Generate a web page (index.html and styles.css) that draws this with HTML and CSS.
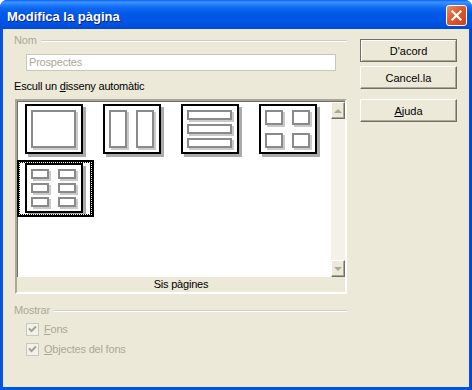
FILE: index.html
```html
<!DOCTYPE html>
<html lang="ca">
<head>
    <meta charset="UTF-8">
    <title>Modifica la pàgina</title>
    <link rel="stylesheet" href="styles.css">
</head>
<body>
    <div class="window">
        <div class="titlebar">
            <span class="title">Modifica la pàgina</span>
            <span class="close-btn">
                <svg width="13" height="13" viewBox="0 0 13 13"><path d="M2.5 2.5 L10.5 10.5 M10.5 2.5 L2.5 10.5" stroke="#fff" stroke-width="2.2" stroke-linecap="square"/></svg>
            </span>
        </div>
        <div class="client">
            <div class="main">
                <div class="fixed-line disabled"><span>Nom</span><i></i></div>
                <div class="name-field">Prospectes</div>
                <div class="label">Escull un <u>d</u>isseny automàtic</div>
                <div class="layout-box">
                    <div class="layout-area">
                        <div class="layout-grid">
                            <div class="cell"><div class="page one"><b></b></div></div>
                            <div class="cell"><div class="page two"><b></b><b></b></div></div>
                            <div class="cell"><div class="page three"><b></b><b></b><b></b></div></div>
                            <div class="cell"><div class="page four"><b></b><b></b><b></b><b></b></div></div>
                            <div class="cell selected"><div class="page six"><b></b><b></b><b></b><b></b><b></b><b></b></div></div>
                        </div>
                        <div class="scrollbar">
                            <div class="sb-btn"><span class="arrow up"></span></div>
                            <div class="sb-btn"><span class="arrow down"></span></div>
                        </div>
                    </div>
                    <div class="layout-name">Sis pàgines</div>
                </div>
                <div class="fixed-line disabled section"><span>Mostrar</span><i></i></div>
                <div class="check disabled">
                    <span class="box"><svg width="11" height="11" viewBox="0 0 11 11"><path d="M2 4.5 L4.5 7 L9 2.5" fill="none" stroke="#a5a291" stroke-width="2"/></svg></span>
                    <span><u>F</u>ons</span>
                </div>
                <div class="check disabled second">
                    <span class="box"><svg width="11" height="11" viewBox="0 0 11 11"><path d="M2 4.5 L4.5 7 L9 2.5" fill="none" stroke="#a5a291" stroke-width="2"/></svg></span>
                    <span><u>O</u>bjectes del fons</span>
                </div>
            </div>
            <div class="buttons">
                <button class="btn default">D'acord</button>
                <button class="btn">Cancel.la</button>
                <button class="btn help"><u>A</u>juda</button>
            </div>
        </div>
    </div>
</body>
</html>
```

FILE: styles.css
```css
body {
    margin: 0;
    background: #fff;
    font-family: "Liberation Sans", Arial, sans-serif;
    font-size: 11px;
    letter-spacing: -0.2px;
    color: #000;
}

.window {
    width: 472px;
    height: 390px;
    display: flex;
    flex-direction: column;
    background: linear-gradient(to right, #0a3fc8 0, #0958ee 1px, #0055e5 3px, #0055e5 469px, #0a3fc8 472px);
    border-radius: 7px 7px 0 0;
    overflow: hidden;
}

.titlebar {
    height: 29px;
    display: flex;
    align-items: center;
    justify-content: space-between;
    padding: 0 5px 0 7px;
    background: linear-gradient(#0a5ef5 0, #3d95ff 2px, #2a85fb 4px, #0e68f2 8px, #0058e6 14px, #0056e4 22px, #0049d8 29px);
}

.title {
    color: #fff;
    font-weight: bold;
    font-size: 13px;
    letter-spacing: 0;
    margin-top: 3px;
    text-shadow: 1px 1px 0 #0a1e8f;
}

.close-btn {
    width: 21px;
    height: 21px;
    box-sizing: border-box;
    border: 1px solid #fff;
    border-radius: 3px;
    background: linear-gradient(135deg, #ec8a68 0, #e0592f 45%, #c9421c 100%);
    display: flex;
    align-items: center;
    justify-content: center;
    margin-top: 2px;
}

.client {
    flex: 1;
    margin: 0 3px 3px;
    background: #ece9d8;
    display: flex;
    gap: 13px;
    padding-left: 11px;
}

.main {
    width: 333px;
    padding-top: 5px;
}

.disabled {
    color: #aca899;
}

.fixed-line {
    display: flex;
    align-items: center;
    height: 13px;
    line-height: 13px;
    gap: 4px;
}

.fixed-line i {
    flex: 1;
    height: 0;
    border-top: 1px solid #d0cebf;
    border-bottom: 1px solid #fff;
}

.fixed-line.section {
    margin-top: 10px;
}

.name-field {
    margin: 7px 0 0 12px;
    width: 310px;
    height: 17px;
    box-sizing: border-box;
    border: 1px solid #c9c7ba;
    background: #fff;
    color: #aca899;
    line-height: 15px;
    padding-left: 2px;
}

.label {
    margin-top: 9px;
    line-height: 13px;
}

.layout-box {
    margin: 6px 0 0 1px;
    width: 332px;
    height: 195px;
    box-sizing: border-box;
    border: 2px solid;
    border-color: #aca899 #fff #fff #aca899;
    box-shadow: inset 1px 1px 0 #716f64;
    display: flex;
    flex-direction: column;
}

.layout-area {
    display: flex;
    margin-left: 1px;
    margin-top: 1px;
    height: 175px;
}

.layout-grid {
    flex: 1;
    background: #fff;
    display: grid;
    grid-template-columns: repeat(4, 78px);
    grid-auto-rows: 59px;
    align-content: start;
}

.cell {
    position: relative;
    padding: 2px 0 0 7px;
}

.cell.selected::after {
    content: "";
    position: absolute;
    left: -1px;
    top: -1px;
    width: 77px;
    height: 57px;
    box-sizing: border-box;
    border: 3px solid #000;
    border-right-width: 4px;
}

.cell.selected::before {
    content: "";
    position: absolute;
    left: 1px;
    top: 1px;
    width: 73px;
    height: 53px;
    box-sizing: border-box;
    border: 1px dotted #fff;
    z-index: 2;
}

.page {
    width: 58px;
    height: 50px;
    box-sizing: border-box;
    border: 2px solid #000;
    background: #fff;
    box-shadow: 3px 3px 0 #ababab;
    padding: 4px;
    display: grid;
}

.page b {
    border: 2px solid #8a8a8a;
    box-shadow: 2px 2px 0 #cacaca;
}

.page.one {
    grid-template-columns: 45px;
    grid-template-rows: 38px;
}

.page.two {
    grid-template-columns: 18px 18px;
    grid-template-rows: 38px;
    column-gap: 9px;
}

.page.three {
    grid-template-columns: 45px;
    grid-template-rows: 10px 10px 10px;
    row-gap: 4px;
}

.page.four {
    grid-template-columns: 18px 18px;
    grid-template-rows: 15px 15px;
    column-gap: 9px;
    row-gap: 8px;
}

.page.six {
    grid-template-columns: 18px 18px;
    grid-template-rows: 10px 10px 10px;
    column-gap: 9px;
    row-gap: 4px;
}

.scrollbar {
    width: 17px;
    background: #f3f1e8;
    border-left: 1px solid #fff;
    box-sizing: border-box;
    display: flex;
    flex-direction: column;
    justify-content: space-between;
}

.sb-btn {
    height: 17px;
    box-sizing: border-box;
    background: #ece9d8;
    border: 1px solid;
    border-color: #fff #716f64 #716f64 #fff;
    box-shadow: inset -1px -1px 0 #aca899;
    display: flex;
    align-items: center;
    justify-content: center;
}

.arrow {
    width: 0;
    height: 0;
    border-left: 4px solid transparent;
    border-right: 4px solid transparent;
}

.arrow.up {
    border-bottom: 4px solid #aca899;
}

.arrow.down {
    border-top: 4px solid #aca899;
}

.layout-name {
    flex: 1;
    text-align: center;
    line-height: 15px;
    background: #ece9d8;
}

.check {
    margin: 6px 0 0 12px;
    display: flex;
    align-items: center;
    gap: 5px;
    height: 13px;
    line-height: 13px;
}

.check.second {
    margin-top: 7px;
}

.check .box {
    width: 13px;
    height: 13px;
    box-sizing: border-box;
    border: 1px solid #cac8bb;
    background: #f2f1ea;
    display: flex;
    align-items: center;
    justify-content: center;
}

.buttons {
    width: 97px;
    padding-top: 10px;
    display: flex;
    flex-direction: column;
}

.btn {
    height: 23px;
    padding: 0;
    font: inherit;
    color: #000;
    background: #ece9d8;
    border: 1px solid;
    border-color: #fff #716f64 #716f64 #fff;
    box-shadow: inset -1px -1px 0 #aca899;
}

.btn + .btn {
    margin-top: 4px;
}

.btn.default {
    border-color: #716f64;
    box-shadow: inset 1px 1px 0 #fff, inset -1px -1px 0 #aca899;
}

.btn.help {
    margin-top: 10px;
}
```
